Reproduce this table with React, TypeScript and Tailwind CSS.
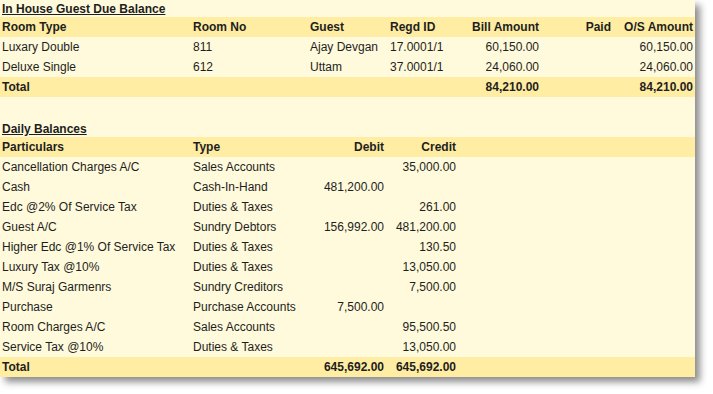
import React from "react";

const font = { fontFamily: '"Liberation Sans", Arial, sans-serif' };

type Cell = { t: string; w: number; r?: boolean };

function Row({ cells, kind }: { cells: Cell[]; kind: "head" | "body" | "total" }) {
  const bg = kind === "body" ? "" : "bg-[#ffeda3]";
  const weight = kind === "body" ? "font-normal" : "font-bold";
  return (
    <div className={`flex h-[20px] items-center leading-[20px] ${bg} ${weight}`}>
      {cells.map((c, i) => (
        <div
          key={i}
          className={`shrink-0 whitespace-nowrap px-[2px] ${c.r ? "text-right" : "text-left"}`}
          style={{ width: c.w }}
        >
          {c.t}
        </div>
      ))}
      <div className="flex-1" />
    </div>
  );
}

const w1 = [191, 117, 80, 82, 71, 72, 82];
const r1 = [false, false, false, false, true, true, true];
const mk1 = (vals: string[]): Cell[] => vals.map((t, i) => ({ t, w: w1[i], r: r1[i] }));

const w2 = [191, 129, 66, 72];
const r2 = [false, false, true, true];
const mk2 = (vals: string[]): Cell[] => vals.map((t, i) => ({ t, w: w2[i], r: r2[i] }));

const daily = [
  ["Cancellation Charges A/C", "Sales Accounts", "", "35,000.00"],
  ["Cash", "Cash-In-Hand", "481,200.00", ""],
  ["Edc @2% Of Service Tax", "Duties & Taxes", "", "261.00"],
  ["Guest A/C", "Sundry Debtors", "156,992.00", "481,200.00"],
  ["Higher Edc @1% Of Service Tax", "Duties & Taxes", "", "130.50"],
  ["Luxury Tax @10%", "Duties & Taxes", "", "13,050.00"],
  ["M/S Suraj Garmenrs", "Sundry Creditors", "", "7,500.00"],
  ["Purchase", "Purchase Accounts", "7,500.00", ""],
  ["Room Charges A/C", "Sales Accounts", "", "95,500.50"],
  ["Service Tax @10%", "Duties & Taxes", "", "13,050.00"],
];

export default function App() {
  return (
    <div className="h-[394px] w-[713px] bg-white" style={font}>
      <div className="w-[695px] bg-[#fffadb] text-[12px] text-[#1e1e1e] shadow-[5px_5px_7px_rgba(0,0,0,0.45)]">
        <div className="h-[17px] px-[2px] pt-[1px] text-[12px] font-bold leading-[16px] underline">
          In House Guest Due Balance
        </div>
        <Row kind="head" cells={mk1(["Room Type", "Room No", "Guest", "Regd ID", "Bill Amount", "Paid", "O/S Amount"])} />
        <Row kind="body" cells={mk1(["Luxary Double", "811", "Ajay Devgan", "17.0001/1", "60,150.00", "", "60,150.00"])} />
        <Row kind="body" cells={mk1(["Deluxe Single", "612", "Uttam", "37.0001/1", "24,060.00", "", "24,060.00"])} />
        <Row kind="total" cells={mk1(["Total", "", "", "", "84,210.00", "", "84,210.00"])} />
        <div className="h-[23px]" />
        <div className="h-[17px] px-[2px] pt-[1px] text-[12px] font-bold leading-[16px] underline">
          Daily Balances
        </div>
        <Row kind="head" cells={mk2(["Particulars", "Type", "Debit", "Credit"])} />
        {daily.map((d, i) => (
          <Row key={i} kind="body" cells={mk2(d)} />
        ))}
        <Row kind="total" cells={mk2(["Total", "", "645,692.00", "645,692.00"])} />
      </div>
    </div>
  );
}
